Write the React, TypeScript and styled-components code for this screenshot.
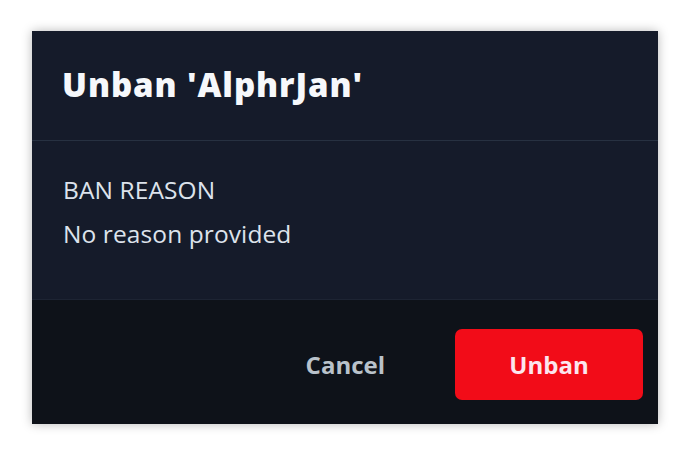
import styled, { createGlobalStyle } from "styled-components";

const GlobalStyle = createGlobalStyle`
  html, body {
    margin: 0;
    padding: 0;
    background: #ffffff;
  }
  body {
    padding: 31px 32px;
    font-family: "Open Sans", "Noto Sans", sans-serif;
  }
`;

const Dialog = styled.div`
  width: 626px;
  height: 393px;
  display: flex;
  flex-direction: column;
  background: #151b2a;
  box-shadow: 0 0 10px rgba(0, 0, 0, 0.28);
  overflow: hidden;
`;

const Header = styled.div`
  height: 110px;
  padding: 0 30px;
  display: flex;
  align-items: center;
  border-bottom: 1px solid #273141;
  box-sizing: border-box;
`;

const Title = styled.h1`
  margin: 0;
  font-size: 33px;
  font-weight: 800;
  color: #f6f8fb;
  letter-spacing: 0.9px;
  line-height: 1;
  padding-bottom: 2px;
`;

const Body = styled.div`
  flex: 1;
  padding: 27px 31px 0;
  display: flex;
  flex-direction: column;
  border-bottom: 1px solid #1d2433;
`;

const Line = styled.div`
  font-size: 24.5px;
  line-height: 44px;
  letter-spacing: 0.1px;
  color: #dde3ec;
`;

const Footer = styled.div`
  height: 124px;
  box-sizing: border-box;
  padding: 29px 15px 24px;
  display: flex;
  justify-content: flex-end;
  align-items: center;
  background: #0e1219;
`;

const Button = styled.button<{ $primary?: boolean }>`
  height: 71px;
  border: none;
  border-radius: 7px;
  font-family: "Open Sans", "Noto Sans", sans-serif;
  font-size: 24px;
  font-weight: 700;
  cursor: pointer;
  padding: ${(p) => (p.$primary ? "0" : "0 70px 0 0")};
  width: ${(p) => (p.$primary ? "188px" : "auto")};
  background: ${(p) => (p.$primary ? "#f20c18" : "transparent")};
  color: ${(p) => (p.$primary ? "#fce6ee" : "#b9c2cb")};
`;

export default function App() {
  return (
    <>
      <GlobalStyle />
      <Dialog>
        <Header>
          <Title>Unban 'AlphrJan'</Title>
        </Header>
        <Body>
          <Line>BAN REASON</Line>
          <Line>No reason provided</Line>
        </Body>
        <Footer>
          <Button>Cancel</Button>
          <Button $primary>Unban</Button>
        </Footer>
      </Dialog>
    </>
  );
}
